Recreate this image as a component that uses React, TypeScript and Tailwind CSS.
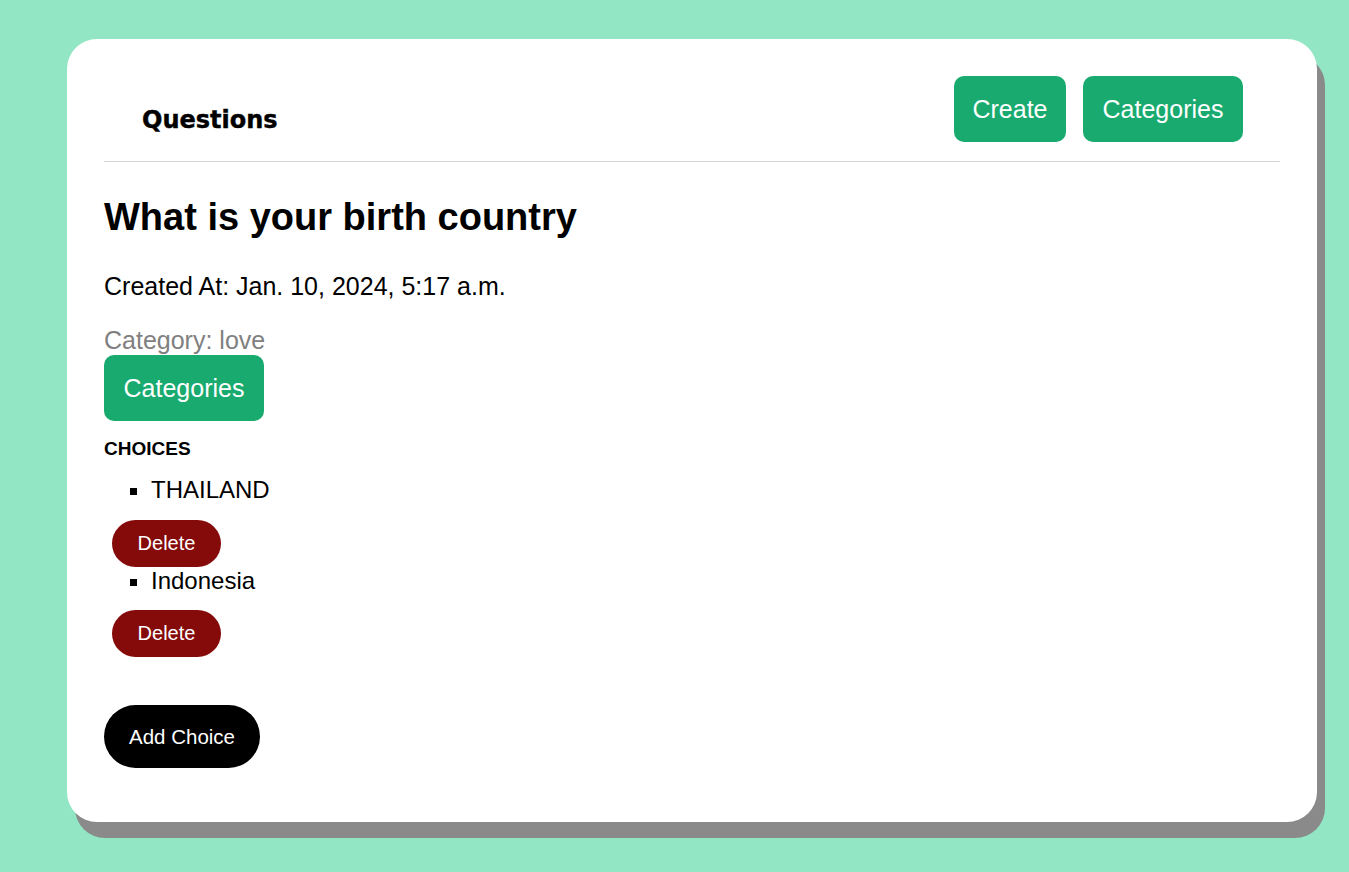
const choices = ["THAILAND", "Indonesia"];

const App = () => {
  return (
    <div className="min-h-screen bg-[#93e6c3] pt-[39px] pb-[35px] font-['Liberation_Sans',Arial,sans-serif] leading-[1.15] text-black">
      <div className="ml-[67px] mr-[32px] rounded-[30px] bg-white px-[37px] pt-[37px] pb-[54px] shadow-[8px_16px_0_#8a8a8a]">
        <div className="flex items-center justify-between border-b border-[#d6d6d6] pb-[19px] pl-[38px] pr-[37px]">
          <h1 className="mt-6 font-['DejaVu_Sans',sans-serif] text-[24px] font-bold [-webkit-text-stroke:0.4px_black]">
            Questions
          </h1>
          <div className="flex gap-[17px]">
            <button className="h-[66px] w-[112px] rounded-[10px] bg-[#18aa6e] text-[25px] text-white">
              Create
            </button>
            <button className="h-[66px] w-[160px] rounded-[10px] bg-[#18aa6e] text-[25px] text-white">
              Categories
            </button>
          </div>
        </div>

        <h2 className="mt-[34px] text-[38px] font-bold">What is your birth country</h2>
        <p className="mt-[32px] text-[25px]">Created At: Jan. 10, 2024, 5:17 a.m.</p>
        <p className="mt-[26px] text-[25px] text-[#808080]">Category: love</p>
        <button className="h-[66px] w-[160px] rounded-[10px] bg-[#18aa6e] text-[25px] text-white">
          Categories
        </button>

        <h3 className="mt-[17px] text-[19px] font-bold">CHOICES</h3>
        <ul className="mt-4 list-[square]">
          {choices.map((c) => (
            <div key={c}>
              <li className="ml-[47px] text-[24px]">{c}</li>
              <button className="mt-4 ml-2 h-[47px] w-[109px] rounded-full bg-[#850b0b] text-[20px] text-white">
                Delete
              </button>
            </div>
          ))}
        </ul>

        <button className="mt-12 h-[63px] w-[156px] rounded-full bg-black text-[20.5px] text-white">
          Add Choice
        </button>
      </div>
    </div>
  );
};

export default App;
